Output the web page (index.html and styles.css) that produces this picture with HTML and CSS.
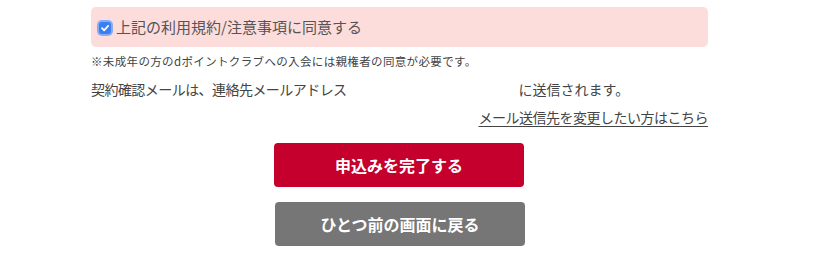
FILE: index.html
```html
<!DOCTYPE html>
<html lang="ja">
<head>
<meta charset="utf-8">
<link rel="stylesheet" href="styles.css">
</head>
<body>
<div class="wrap">
  <label class="agree">
    <span class="check">
      <svg viewBox="0 0 12 12" width="12" height="12"><path d="M3 6.2 L5.1 8.3 L9.2 3.9" fill="none" stroke="#fff" stroke-width="1.8" stroke-linecap="round" stroke-linejoin="round"/></svg>
    </span>
    <span class="agree-text">上記の利用規約/注意事項に同意する</span>
  </label>
  <p class="note">※未成年の方のdポイントクラブへの入会には親権者の同意が必要です。</p>
  <p class="mail"><span class="mail-a">契約確認メールは、連絡先メールアドレス</span><span class="addr"></span><span>に送信されます。</span></p>
  <p class="change"><a href="#" class="change-link">メール送信先を変更したい方はこちら</a></p>
  <div class="buttons">
    <button class="btn btn-primary">申込みを完了する</button>
    <button class="btn btn-back">ひとつ前の画面に戻る</button>
  </div>
</div>
</body>
</html>
```

FILE: styles.css
```css
html, body {
  margin: 0;
  padding: 0;
  background: #fff;
}
body {
  font-family: "Noto Sans CJK JP", "Noto Sans", sans-serif;
  color: #444;
}
.wrap {
  margin-left: 91px;
  width: 617px;
  padding-top: 7px;
}
.agree {
  display: flex;
  align-items: center;
  height: 40px;
  background: #fddcdc;
  border-radius: 5px;
  padding-left: 6px;
  box-sizing: border-box;
}
.check {
  display: flex;
  align-items: center;
  justify-content: center;
  width: 12px;
  height: 12px;
  background: #3a7ef5;
  border-radius: 3px;
  box-shadow: 0 0 0 2px #86acf7;
  margin-left: 2px;
  margin-top: 1px;
}
.agree-text {
  font-size: 15px;
  line-height: 20px;
  color: #555;
  margin-left: 5px;
}
.note {
  margin: 6px 0 0;
  font-size: 11.5px;
  letter-spacing: 0.35px;
  line-height: 16px;
  color: #444;
}
.mail {
  margin: 10px 0 0;
  font-size: 14px;
  line-height: 20px;
  color: #444;
  display: flex;
}
.mail-a {
  letter-spacing: -0.55px;
}
.addr {
  width: 172px;
}
.change {
  margin: 8px 0 0;
  font-size: 14px;
  line-height: 20px;
  text-align: right;
}
.change-link {
  color: #444;
  letter-spacing: -0.5px;
  text-decoration: underline;
  text-underline-offset: 3px;
}
.buttons {
  margin-top: 16px;
  display: flex;
  flex-direction: column;
  align-items: center;
  gap: 15px;
}
.btn {
  width: 250px;
  height: 44px;
  border: none;
  border-radius: 4px;
  color: #fff;
  font-family: "Noto Sans CJK JP", sans-serif;
  font-size: 16px;
  font-weight: bold;
  padding: 0;
}
.btn-primary {
  background: #c5002c;
  margin-left: -1px;
}
.btn-back {
  background: #767676;
  margin-left: 1px;
}
```
